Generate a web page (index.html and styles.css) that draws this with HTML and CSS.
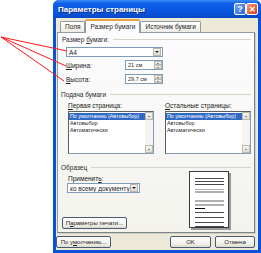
FILE: index.html
```html
<!DOCTYPE html>
<html lang="ru">
<head>
    <meta charset="UTF-8">
    <title>Параметры страницы</title>
    <link rel="stylesheet" href="styles.css">
</head>
<body>
    <div class="screen">
        <div class="window">
            <div class="titlebar">
                <span class="title">Параметры страницы</span>
                <span class="tb-btn help">?</span>
                <span class="tb-btn close">✕</span>
            </div>
            <div class="client">
                <div class="tabs">
                    <span class="tab">Поля</span>
                    <span class="tab active">Размер бумаги</span>
                    <span class="tab">Источник бумаги</span>
                </div>
                <div class="panel">
                    <div class="group-title"><span>Размер <u>б</u>умаги:</span></div>
                    <div class="combo size-combo">
                        <span class="combo-text">A4</span>
                        <span class="drop-btn"></span>
                    </div>
                    <div class="field-row">
                        <span><u>Ш</u>ирина:</span>
                        <div class="spin">
                            <span class="spin-text">21 см</span>
                            <span class="spin-btns"><i class="up"></i><i class="down"></i></span>
                        </div>
                    </div>
                    <div class="field-row">
                        <span><u>В</u>ысота:</span>
                        <div class="spin">
                            <span class="spin-text">29,7 см</span>
                            <span class="spin-btns"><i class="up"></i><i class="down"></i></span>
                        </div>
                    </div>

                    <div class="group-title feed-title"><span>Подача бумаги</span></div>
                    <div class="lists">
                        <div class="list-col">
                            <span class="list-label"><u>П</u>ервая страница:</span>
                            <div class="listbox">
                                <div class="items">
                                    <div class="item selected">По умолчанию (Автовыбор)</div>
                                    <div class="item">Автовыбор</div>
                                    <div class="item">Автоматически</div>
                                </div>
                                <div class="scrollbar"><i class="up"></i><i class="down"></i></div>
                            </div>
                        </div>
                        <div class="list-col">
                            <span class="list-label"><u>О</u>стальные страницы:</span>
                            <div class="listbox">
                                <div class="items">
                                    <div class="item selected">По умолчанию (Автовыбор)</div>
                                    <div class="item">Автовыбор</div>
                                    <div class="item">Автоматически</div>
                                </div>
                                <div class="scrollbar"><i class="up"></i><i class="down"></i></div>
                            </div>
                        </div>
                    </div>

                    <div class="group-title sample-title"><span>Образец</span></div>
                    <div class="sample">
                        <div class="sample-left">
                            <span class="apply-label">Применит<u>ь</u>:</span>
                            <div class="combo apply-combo">
                                <span class="combo-text">ко всему документу</span>
                                <span class="drop-btn"></span>
                            </div>
                            <button class="btn print-btn">П<u>а</u>раметры печати...</button>
                        </div>
                        <div class="page-preview">
                            <div class="pl" style="margin-top: 6px"></div>
                            <div class="pl" style="margin-top: 2px"></div>
                            <div class="pl" style="margin-top: 2px"></div>
                            <div class="pl gray" style="margin-top: 4px"></div>
                            <div class="pl gray" style="margin-top: 1px"></div>
                            <div class="pl gray" style="margin-top: 7px"></div>
                            <div class="pl gray" style="margin-top: 2px"></div>
                            <div class="pl dark" style="margin-top: 2px"></div>
                            <div class="pl" style="margin-top: 3px"></div>
                            <div class="pl" style="margin-top: 4px"></div>
                            <div class="pl" style="margin-top: 4px"></div>
                            <div class="pl" style="margin-top: 3px"></div>
                        </div>
                    </div>
                </div>
                <div class="footer">
                    <button class="btn default-btn">По у<u>м</u>олчанию...</button>
                    <span class="spacer"></span>
                    <button class="btn ok-btn">OK</button>
                    <button class="btn cancel-btn">Отмена</button>
                </div>
            </div>
        </div>

        <svg class="arrows" width="261" height="253" viewBox="0 0 261 253">
            <line x1="1" y1="37" x2="67" y2="51" />
            <line x1="1" y1="37" x2="66" y2="66" />
            <line x1="1" y1="37" x2="64" y2="81" />
        </svg>
    </div>
</body>
</html>
```

FILE: styles.css
```css
:root {
    --dialog-bg: #ece9d8;
    --panel-border: #919b9c;
    --field-border: #7f9db9;
    --text: #1c1c1c;
    --xp-blue: #0a53d8;
}

* {
    box-sizing: border-box;
}

body {
    margin: 0;
    background: #ffffff;
    font-family: "Liberation Sans", Arial, sans-serif;
    font-size: 6.5px;
    line-height: 7px;
    color: var(--text);
}

u {
    text-decoration-thickness: 1px;
}

.screen {
    position: relative;
    width: 261px;
    height: 253px;
    overflow: hidden;
}

.window {
    margin-left: 53px;
    width: 208px;
    height: 253px;
    background: var(--xp-blue);
    border-radius: 6px 6px 0 0;
    padding: 0 3px 3px;
    display: flex;
    flex-direction: column;
}

.titlebar {
    height: 18px;
    margin: 0 -3px;
    padding: 0 3px 0 5px;
    display: flex;
    align-items: center;
    border-radius: 6px 6px 0 0;
    background: linear-gradient(#3b8cf5 0%, #0e5fe8 20%, #0a55e0 70%, #0848c4 100%);
}

.title {
    flex: 1;
    color: #ffffff;
    font-weight: bold;
    font-size: 8px;
    text-shadow: 1px 1px 0 #0a2a80;
}

.tb-btn {
    width: 12px;
    height: 12px;
    border: 1px solid #ffffff;
    border-radius: 2px;
    display: flex;
    align-items: center;
    justify-content: center;
    color: #ffffff;
    font-weight: bold;
    font-size: 9px;
}

.help {
    background: linear-gradient(135deg, #6fa3f7, #2662e0);
}

.close {
    background: linear-gradient(135deg, #f09a78, #d8401c);
    font-size: 8px;
}

.client {
    flex: 1;
    background: var(--dialog-bg);
    padding: 1px 3px 0 1px;
    display: flex;
    flex-direction: column;
}

.tabs {
    height: 13px;
    padding-left: 3px;
    display: flex;
    align-items: flex-end;
    position: relative;
    z-index: 1;
}

.tab {
    height: 11px;
    padding: 0 4px;
    border: 1px solid var(--panel-border);
    border-bottom: none;
    border-radius: 2px 2px 0 0;
    background: linear-gradient(#ffffff, #ecebe4);
    line-height: 10px;
    margin-right: -1px;
}

.tab.active {
    height: 14px;
    margin-bottom: -1px;
    padding: 0 4px;
    border-top: 2px solid #e5a23e;
    background: #fcfcfe;
    line-height: 11px;
    margin-left: 1px;
    margin-right: 0;
}

.panel {
    height: 201px;
    border: 1px solid var(--panel-border);
    border-right-color: #7c8587;
    border-bottom-color: #7c8587;
    background: linear-gradient(#fcfcfe, #f3f2ec);
    box-shadow: 1px 1px 0 #d0cfc5;
    padding: 0 3px;
}

.group-title {
    display: flex;
    align-items: center;
    height: 7px;
    margin-top: 3px;
    margin-left: 1px;
    color: #2a2a2a;
    white-space: nowrap;
}

.group-title::after {
    content: "";
    flex: 1;
    margin-left: 4px;
    border-top: 1px solid #d6d4c8;
}

.feed-title {
    margin-top: 7px;
    margin-left: 0;
}

.sample-title {
    margin-top: 10px;
    margin-left: 0;
}

.combo {
    height: 10px;
    border: 1px solid var(--field-border);
    background: #ffffff;
    display: flex;
    align-items: center;
    padding: 0 1px 0 2px;
}

.combo-text {
    flex: 1;
    white-space: nowrap;
    overflow: hidden;
}

.drop-btn {
    width: 8px;
    height: 8px;
    background: linear-gradient(#f4f3ee, #dcdad0);
    border: 1px solid #b9b7ab;
    display: flex;
    align-items: center;
    justify-content: center;
}

.drop-btn::after {
    content: "";
    border-left: 2px solid transparent;
    border-right: 2px solid transparent;
    border-top: 2px solid #222;
}

.size-combo {
    width: 97px;
    margin: 4px 0 0 5px;
}

.field-row {
    width: 97px;
    height: 10px;
    margin: 3px 0 0 5px;
    display: flex;
    align-items: center;
    justify-content: space-between;
}

.field-row + .field-row {
    margin-top: 4px;
}

.spin {
    width: 38px;
    height: 10px;
    border: 1px solid var(--field-border);
    background: #ffffff;
    display: flex;
    align-items: center;
    padding-left: 2px;
}

.spin-text {
    flex: 1;
    font-size: 5.5px;
}

.spin-btns {
    width: 8px;
    height: 8px;
    display: flex;
    flex-direction: column;
}

.spin-btns i,
.scrollbar i {
    flex: 1;
    background: linear-gradient(#f6f5f0, #dedcd2);
    border: 1px solid #bdbbaf;
    display: flex;
    align-items: center;
    justify-content: center;
}

.spin-btns i::after,
.scrollbar i::after {
    content: "";
    border-left: 1.5px solid transparent;
    border-right: 1.5px solid transparent;
}

.spin-btns .up::after,
.scrollbar .up::after {
    border-bottom: 1.5px solid #333;
}

.spin-btns .down::after,
.scrollbar .down::after {
    border-top: 1.5px solid #333;
}

.lists {
    display: flex;
    gap: 11px;
    margin: 4px 0 0 7px;
}

.list-col {
    width: 86px;
    display: flex;
    flex-direction: column;
}

.list-label {
    height: 7px;
    white-space: nowrap;
}

.listbox {
    margin-top: 2px;
    height: 43px;
    border: 1px solid var(--field-border);
    border-left-color: #5d5d5d;
    border-top-color: #5d5d5d;
    background: #ffffff;
    display: flex;
}

.items {
    flex: 1;
    min-width: 0;
    overflow: hidden;
    padding-top: 1px;
}

.item {
    height: 7px;
    line-height: 7px;
    padding-left: 1px;
    white-space: nowrap;
    font-size: 5.4px;
}

.item.selected {
    background: #316ac5;
    color: #ffffff;
}

.scrollbar {
    width: 8px;
    background: #f4f3ee;
    display: flex;
    flex-direction: column;
    justify-content: space-between;
}

.scrollbar i {
    flex: none;
    height: 8px;
}

.sample {
    display: flex;
    padding-left: 1px;
}

.sample-left {
    width: 127px;
    display: flex;
    flex-direction: column;
    align-items: flex-start;
}

.apply-label {
    margin: 4px 0 0 6px;
    height: 7px;
}

.apply-combo {
    width: 73px;
    margin: 1px 0 0 5px;
}

.btn {
    height: 12px;
    padding: 0;
    border: 1px solid #4a5a72;
    border-radius: 2px;
    background: linear-gradient(#ffffff, #f0efe8 70%, #dcdace);
    font-family: inherit;
    font-size: 6px;
    color: var(--text);
    line-height: 10px;
}

.print-btn {
    width: 65px;
    margin-top: 24px;
}

.page-preview {
    width: 40px;
    height: 57px;
    background: #ffffff;
    border: 1px solid #3a3a3a;
    box-shadow: 2px 2px 0 #9a9a9a;
    padding: 0 4px 0 5px;
    display: flex;
    flex-direction: column;
}

.pl {
    height: 1px;
    background: #4a4a4a;
}

.pl.gray {
    height: 2px;
    background: #b0b0b0;
}

.pl.dark {
    height: 2px;
    width: 10px;
    background: #000000;
}

.footer {
    display: flex;
    align-items: center;
    padding-top: 3px;
    margin-left: -1px;
    gap: 4px;
}

.spacer {
    flex: 1;
}

.default-btn {
    width: 55px;
}

.ok-btn {
    width: 41px;
}

.cancel-btn {
    width: 40px;
    margin-right: 0;
}

.arrows {
    position: absolute;
    left: 0;
    top: 0;
    pointer-events: none;
}

.arrows line {
    stroke: #ff1a1a;
    stroke-width: 1;
}
```
